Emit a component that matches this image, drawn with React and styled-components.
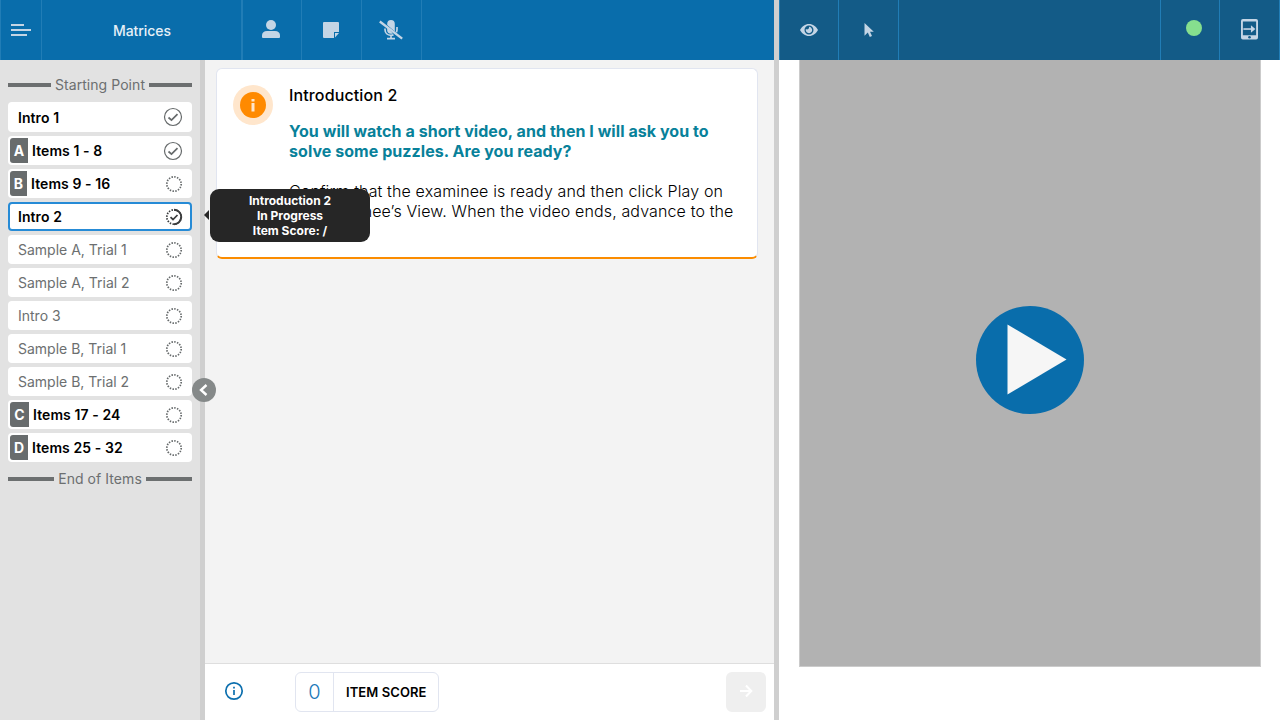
import React from "react";
import styled, { createGlobalStyle } from "styled-components";

const GlobalStyle = createGlobalStyle`
  *, *::before, *::after { box-sizing: border-box; }
  body { margin: 0; font-family: Inter, "Liberation Sans", sans-serif; background: #fff; color: #000; }
  svg { display: block; flex: none; }
`;

const Screen = styled.div`
  display: flex;
  width: 1280px;
  height: 720px;
  overflow: hidden;
`;

const Pane = styled.section`
  display: flex;
  flex-direction: column;
  width: ${(p) => p.$width}px;
  height: 100%;
`;

const Splitter = styled.div`
  position: relative;
  flex: none;
  width: 5px;
  background: #cfcfcf;
`;

const Toolbar = styled.header`
  display: flex;
  flex: none;
  height: 60px;
  background: ${(p) => (p.$dark ? "#135b87" : "#096dab")};
  color: #c4d5e5;
`;

const Cell = styled.div`
  display: flex;
  align-items: center;
  justify-content: center;
  width: ${(p) => p.$width}px;
  border-left: ${(p) => (p.$first === false ? 0 : 1)}px solid #217db6;
  border-right: ${(p) => p.$end || 0}px solid #217db6;
  padding: 0 ${(p) => p.$pr || 0}px ${(p) => p.$pb || 0}px ${(p) => p.$pl || 0}px;
`;

const Title = styled.h1`
  margin: 2px 0 0;
  font-size: 14px;
  line-height: 20px;
  font-weight: 500;
  letter-spacing: -0.05px;
  color: #e6f0f7;
`;

const Spacer = styled.div`
  flex: 1;
`;

const Body = styled.div`
  display: flex;
  flex: 1;
  min-height: 0;
`;

const Sidebar = styled.nav`
  display: flex;
  flex-direction: column;
  gap: 4px;
  width: 200px;
  padding: 13px 8px 0;
  background: #e2e2e2;
`;

const Marker = styled.div`
  display: flex;
  align-items: center;
  gap: 4px;
  height: ${(p) => p.$height}px;
  margin-bottom: ${(p) => p.$gap || 0}px;
  font-size: 14px;
  line-height: 22px;
  letter-spacing: 0.06px;
  white-space: nowrap;
  color: #6c6f70;
  &::before, &::after { content: ""; flex: 1; height: 4px; background: #6c6f70; }
`;

const Item = styled.div`
  display: flex;
  align-items: center;
  height: ${(p) => (p.$tall ? 30 : 29)}px;
  padding-left: ${(p) => (p.$active ? 8 : p.$badged ? 2 : 10)}px;
  padding-right: ${(p) => (p.$active ? 7 : 9)}px;
  border: ${(p) => (p.$active ? "2px solid #268bd6" : "0")};
  border-radius: 4px;
  background: #fff;
`;

const Letter = styled.span`
  display: flex;
  align-items: center;
  justify-content: center;
  width: ${(p) => p.$width}px;
  height: 25px;
  margin-right: 4px;
  border-radius: 3px 0 0 3px;
  background: #686c6d;
  color: #fff;
  font-size: 14px;
  font-weight: 700;
`;

const Label = styled.span`
  flex: 1;
  margin-top: ${(p) => (p.$tall ? 2 : 0)}px;
  white-space: nowrap;
  font-size: 14px;
  line-height: 20px;
  font-weight: ${(p) => (p.$muted ? 400 : 600)};
  letter-spacing: ${(p) => (p.$muted ? 0 : 0.08)}px;
  color: ${(p) => (p.$muted ? "#6c6f70" : "#000")};
`;

const Collapse = styled.button`
  position: absolute;
  z-index: 2;
  left: -8px;
  top: 318px;
  display: flex;
  align-items: center;
  justify-content: center;
  width: 24px;
  height: 24px;
  padding: 0;
  border: 0;
  border-radius: 50%;
  background: #858989;
`;

const Tooltip = styled.div`
  position: absolute;
  z-index: 3;
  left: 10px;
  top: 128.5px;
  width: 160px;
  height: 53px;
  padding-top: 4.5px;
  border-radius: 9px;
  background: #262626;
  color: #fff;
  text-align: center;
  font-size: 12px;
  line-height: 15px;
  font-weight: 700;
  &::before {
    content: "";
    position: absolute;
    left: -6px;
    top: 21px;
    border: 5px solid transparent;
    border-left-width: 0;
    border-right-color: #262626;
  }
`;

const Main = styled.main`
  display: flex;
  flex-direction: column;
  width: 569px;
  background: #f3f3f3;
`;

const Content = styled.div`
  flex: 1;
  padding: 8px 16px 0 11px;
`;

const Card = styled.article`
  display: flex;
  gap: 16px;
  height: 191px;
  padding: 16px 0 0 16px;
  border: 1px solid #e1e5f0;
  border-bottom: 2px solid #fb8c00;
  border-radius: 6px;
  background: #fff;
`;

const Halo = styled.div`
  display: flex;
  align-items: center;
  justify-content: center;
  width: 40px;
  height: 40px;
  border-radius: 50%;
  background: #ffe6cc;
`;

const Copy = styled.div`
  font-size: 16px;
  line-height: 20px;
  white-space: nowrap;
`;

const Heading = styled.h2`
  margin: 0 0 16px;
  font-size: 16px;
  line-height: 20px;
  font-weight: 500;
  letter-spacing: 0.13px;
`;

const Prompt = styled.p`
  margin: 0 0 20px;
  font-weight: 700;
  letter-spacing: 0.055px;
  color: #08819a;
`;

const Direction = styled.p`
  margin: 0;
  font-weight: 300;
  letter-spacing: 0.13px;
`;

const Footer = styled.footer`
  display: flex;
  align-items: center;
  height: 57px;
  padding: 0 8px 0 19px;
  border-top: 1px solid #dedede;
  background: #fff;
`;

const Hint = styled.span`
  padding-bottom: 2px;
`;

const Score = styled.div`
  display: flex;
  width: 144px;
  height: 40px;
  margin-left: 51px;
  border: 1px solid #e1e5f0;
  border-radius: 6px;
`;

const Value = styled.span`
  width: 38px;
  border-right: 1px solid #e1e5f0;
  text-align: center;
  color: #2078b8;
  font-size: 20px;
  line-height: 38px;
  font-weight: 300;
`;

const ScoreLabel = styled.span`
  padding-left: 12px;
  font-size: 13px;
  line-height: 39px;
  font-weight: 600;
  letter-spacing: 0.08px;
  white-space: nowrap;
`;

const Next = styled.button`
  display: flex;
  align-items: center;
  justify-content: center;
  width: 40px;
  height: 40px;
  padding: 0 0 2px;
  border: 0;
  border-radius: 6px;
  background: #efefef;
`;

const Stage = styled.div`
  display: flex;
  align-items: center;
  justify-content: center;
  width: 462px;
  height: 607px;
  margin-left: 20px;
  padding-bottom: 6px;
  border: 1px solid #cbcbcb;
  border-top: 0;
  background: #b2b2b2;
`;

const MenuIcon = () => (
  <svg width="20" height="12" fill="currentColor">
    <path d="M0 0h13v2H0zM0 5h20v2H0zM0 10h16v2H0z" />
  </svg>
);

const PersonIcon = () => (
  <svg width="18" height="18" fill="currentColor">
    <circle cx="9" cy="5" r="5" />
    <path d="M0 17v-1.500C0 12.500 2 11 5 11h8c3 0 5 1.500 5 4.500V17q0 1-1 1H1q-1 0-1-1z" />
  </svg>
);

const NoteIcon = () => (
  <svg width="16" height="16" fill="currentColor">
    <path d="M1 0h14q1 0 1 1v9h-5v6H1q-1 0-1-1V1q0-1 1-1z" />
    <path d="M12 11h4l-4 4.500z" />
  </svg>
);

const MicOffIcon = () => (
  <svg width="24" height="20" fill="none" stroke="currentColor">
    <path d="M8.200 5V4a3.800 4 0 0 1 7.600 0v7.500z" fill="currentColor" stroke="none" />
    <path d="M8.200 7.500 14 13.500c-4 1-5.800-1-5.800-3z" fill="currentColor" stroke="none" />
    <path d="M18 7v2.500c0 1-.2 2-.7 2.800M6 8.500v1c0 3.500 2.500 5.800 6 5.800q1.500 0 2.500-.5M12 15v3M8 18.700h8" strokeWidth="1.700" />
    <path d="M.8 1.500 23.200 18.700" strokeWidth="2.300" />
  </svg>
);

const EyeIcon = () => (
  <svg width="18" height="12" fill="currentColor">
    <path fillRule="evenodd" d="M0 6C2 2.500 5 0 9 0s7 2.500 9 6c-2 3.500-5 6-9 6S2 9.500 0 6zm9-4.500a4.500 4.500 0 1 0 0 9 4.500 4.500 0 0 0 0-9z" />
    <path d="M9 2.800A3.200 3.200 0 1 1 5.900 5 2 2 0 0 0 9 2.800z" />
  </svg>
);

const PointerIcon = () => (
  <svg width="10" height="14" fill="currentColor">
    <path d="M.5 0 9.800 8.700H6l2 4.300-2.200 1-2-4.400L.5 12.800z" />
  </svg>
);

const TabletIcon = () => (
  <svg width="17" height="21" viewBox="0 0 18 22">
    <path fill="currentColor" fillRule="evenodd" d="M2 0h14q2 0 2 2v17.500q0 2-2 2H2q-2 0-2-2V2Q0 0 2 0zm0 2.500v14.500h14V2.500z" />
    <circle cx="9" cy="19.200" r="1.400" fill="#135b87" />
    <path d="M2.500 10.500H11" stroke="currentColor" strokeWidth="1.700" />
    <path d="M10.500 6.500 15.200 10.500 10.500 14.500z" fill="currentColor" />
  </svg>
);

const StatusIcon = ({ status }) => {
  if (status === "done")
    return (
      <svg width="20" height="20" fill="none" stroke="#666a6b">
        <circle cx="10" cy="10" r="8.500" strokeWidth="1.200" />
        <path d="m5.500 10.500 3 2.700 6-6" strokeWidth="1.700" />
      </svg>
    );
  return (
    <svg width="18" height="18" fill="none" stroke={status === "current" ? "#3b3d3e" : "#666a6b"}>
      <circle cx="9" cy="9" r="7.200" strokeWidth="1.700" strokeDasharray="1.500 1.327" />
      {status === "current" && (
        <>
          <path d="M9 1.800a7.200 7.200 0 0 1 0 14.400" strokeWidth="2" />
          <path d="m5.500 9.200 2.500 2.300 4.500-4.500" strokeWidth="1.700" />
        </>
      )}
    </svg>
  );
};

const items = [
  { label: "Intro 1", status: "done", tall: true },
  { label: "Items 1 - 8", letter: "A", letterWidth: 18, status: "done" },
  { label: "Items 9 - 16", letter: "B", letterWidth: 17, status: "open" },
  { label: "Intro 2", status: "current" },
  { label: "Sample A, Trial 1", muted: true },
  { label: "Sample A, Trial 2", muted: true },
  { label: "Intro 3", muted: true },
  { label: "Sample B, Trial 1", muted: true },
  { label: "Sample B, Trial 2", muted: true },
  { label: "Items 17 - 24", letter: "C", letterWidth: 19 },
  { label: "Items 25 - 32", letter: "D", letterWidth: 18 },
];

export default function App() {
  return (
    <Screen>
      <GlobalStyle />
      <Pane $width={774}>
        <Toolbar>
          <Cell $width={41}><MenuIcon /></Cell>
          <Cell $width={202} $end={2} $pl={1}><Title>Matrices</Title></Cell>
          <Cell $width={58} $first={false} $pr={2} $pb={2}><PersonIcon /></Cell>
          <Cell $width={60} $pr={1}><NoteIcon /></Cell>
          <Cell $width={61} $end={1} $pr={1}><MicOffIcon /></Cell>
        </Toolbar>
        <Body>
          <Sidebar>
            <Marker $height={24} $gap={1}>Starting Point</Marker>
            {items.map((item) => (
              <Item key={item.label} $tall={item.tall} $active={item.status === "current"} $badged={!!item.letter}>
                {item.letter && <Letter $width={item.letterWidth}>{item.letter}</Letter>}
                <Label $muted={item.muted} $tall={item.tall}>{item.label}</Label>
                <StatusIcon status={item.status} />
              </Item>
            ))}
            <Marker $height={26}>End of Items</Marker>
          </Sidebar>
          <Splitter>
            <Collapse aria-label="Collapse">
              <svg width="24" height="24" fill="none" stroke="#fff" strokeWidth="2.400"><path d="m14.500 7-5.500 5 5.500 5" /></svg>
            </Collapse>
            <Tooltip>Introduction 2<br />In Progress<br />Item Score: /</Tooltip>
          </Splitter>
          <Main>
            <Content>
              <Card>
                <Halo>
                  <svg width="26" height="26"><circle cx="13" cy="13" r="13" fill="#ff8a00" /><path d="M11.500 7h3v2.500h-3zM11.500 11h3v8.500h-3z" fill="#ffe6cc" /></svg>
                </Halo>
                <Copy>
                  <Heading>Introduction 2</Heading>
                  <Prompt>You will watch a short video, and then I will ask you to<br />solve some puzzles. Are you ready?</Prompt>
                  <Direction>Confirm that the examinee is ready and then click Play on<br />the Examinee’s View. When the video ends, advance to the</Direction>
                </Copy>
              </Card>
            </Content>
            <Footer>
              <Hint>
                <svg width="20" height="20" fill="none" stroke="#0c6fae"><circle cx="10" cy="10" r="8.200" strokeWidth="1.700" /><path d="M10 5.700v1.800M10 9v5" strokeWidth="1.700" /></svg>
              </Hint>
              <Score><Value>0</Value><ScoreLabel>ITEM SCORE</ScoreLabel></Score>
              <Spacer />
              <Next aria-label="Next">
                <svg width="14" height="14" fill="none" stroke="#fff" strokeWidth="2"><path d="M1 7h11M7 1.500 12.300 7 7 12.500" /></svg>
              </Next>
            </Footer>
          </Main>
        </Body>
      </Pane>
      <Splitter />
      <Pane $width={501}>
        <Toolbar $dark>
          <Cell $width={59}><EyeIcon /></Cell>
          <Cell $width={61} $end={1}><PointerIcon /></Cell>
          <Spacer />
          <Cell $width={59} $pl={8} $pb={4}>
            <svg width="16" height="16"><circle cx="8" cy="8" r="8" fill="#86df8e" /></svg>
          </Cell>
          <Cell $width={61} $end={1} $pb={1}><TabletIcon /></Cell>
        </Toolbar>
        <Stage>
          <svg width="110" height="110"><circle cx="55" cy="55" r="54" fill="#096dab" /><path d="M32.500 19.500v70L91.500 54.500z" fill="#f6f6f6" /></svg>
        </Stage>
      </Pane>
    </Screen>
  );
}
